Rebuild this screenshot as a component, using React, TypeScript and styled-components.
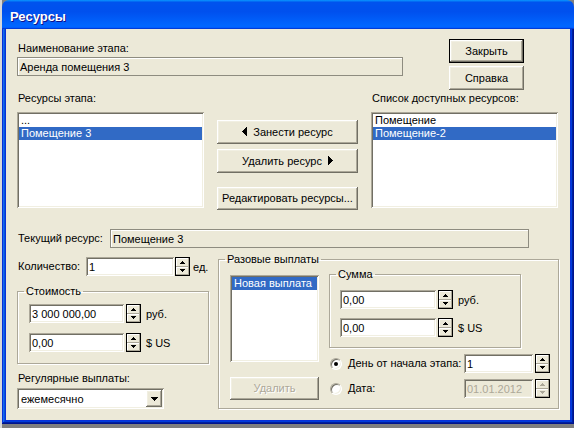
import React from 'react';
import styled, { createGlobalStyle, css } from 'styled-components';

const FACE = '#ece9d8';

const GlobalStyle = createGlobalStyle`
  html, body {
    margin: 0;
    padding: 0;
  }
  body {
    width: 574px;
    height: 428px;
    overflow: hidden;
    background: #7f7f7f;
    font-family: 'Liberation Sans', Arial, sans-serif;
    font-size: 11px;
    color: #000;
  }
`;

const raised = css`
  box-shadow: inset -1px -1px #716f64, inset 1px 1px #fff, inset -2px -2px #aca899, inset 2px 2px #f1efe2;
`;

const sunken = css`
  box-shadow: inset 1px 1px #aca899, inset -1px -1px #fff, inset 2px 2px #716f64, inset -2px -2px #f1efe2;
`;

const Desktop = styled.div`
  height: 428px;
  padding-left: 2px;
  box-sizing: border-box;
  background: linear-gradient(to right, #d8d8d8 0 2px, #7f7f7f 2px);
`;

const Window = styled.div`
  width: 572px;
  height: 424px;
  display: flex;
  flex-direction: column;
`;

const TitleBar = styled.div`
  flex: none;
  height: 29px;
  box-sizing: border-box;
  padding: 3px 0 0 8px;
  display: flex;
  align-items: center;
  border-radius: 7px 7px 0 0;
  background: linear-gradient(180deg, #0997ff, #0053ee 8%, #0050ee 40%, #06f 88%, #06f 93%, #005bff 95%, #003dd7 96%, #003dd7);
  color: #fff;
  font: bold 13px 'Liberation Sans', Arial, sans-serif;
  text-shadow: 1px 1px #0f1089;
`;

const Frame = styled.div`
  flex: 1;
  padding: 0 4px 4px;
  background: #0831d9;
  box-shadow: inset -1px -1px #00138c, inset 1px 0 #0831d9, inset -2px -2px #001ea0, inset 2px 0 #166aee,
    inset -3px -3px #003bda, inset 3px 0 #0855dd;
`;

const Client = styled.div`
  height: 100%;
  box-sizing: border-box;
  padding: 10px 0 0 11px;
  background: ${FACE};
`;

const Row = styled.div<{ $mt?: number; $ml?: number; $align?: string }>`
  display: flex;
  align-items: ${(p) => p.$align ?? 'flex-start'};
  margin-top: ${(p) => p.$mt ?? 0}px;
  margin-left: ${(p) => p.$ml ?? 0}px;
`;

const Stack = styled.div<{ $w?: number; $mt?: number; $ml?: number; $gap?: number }>`
  display: flex;
  flex-direction: column;
  flex: none;
  width: ${(p) => (p.$w ? `${p.$w}px` : 'auto')};
  margin-top: ${(p) => p.$mt ?? 0}px;
  margin-left: ${(p) => p.$ml ?? 0}px;
  gap: ${(p) => p.$gap ?? 0}px;
`;

const Label = styled.div<{ $mt?: number; $ml?: number; $w?: number; $disabled?: boolean }>`
  flex: none;
  height: 13px;
  line-height: 13px;
  white-space: nowrap;
  width: ${(p) => (p.$w ? `${p.$w}px` : 'auto')};
  margin-top: ${(p) => p.$mt ?? 0}px;
  margin-left: ${(p) => p.$ml ?? 0}px;
  color: ${(p) => (p.$disabled ? '#aca899' : '#000')};
`;

const ReadField = styled.div<{ $w: number }>`
  flex: none;
  width: ${(p) => p.$w}px;
  height: 19px;
  box-sizing: border-box;
  padding-left: 2px;
  display: flex;
  align-items: center;
  border: 1px solid #8e8c80;
  box-shadow: inset 1px 1px #fff;
  background: ${FACE};
  white-space: nowrap;
`;

const Input = styled.div<{ $w: number; $disabled?: boolean }>`
  flex: none;
  width: ${(p) => p.$w}px;
  height: 19px;
  box-sizing: border-box;
  padding: 1px 0 0 3px;
  display: flex;
  align-items: center;
  background: ${(p) => (p.$disabled ? FACE : '#fff')};
  color: ${(p) => (p.$disabled ? '#aca899' : '#000')};
  white-space: nowrap;
  ${sunken}
`;

const Button = styled.button<{ $w: number; $h: number; $mt?: number; $default?: boolean }>`
  flex: none;
  width: ${(p) => p.$w}px;
  height: ${(p) => p.$h}px;
  margin-top: ${(p) => p.$mt ?? 0}px;
  padding: 0 0 1px;
  border: none;
  box-sizing: border-box;
  display: flex;
  align-items: center;
  justify-content: center;
  gap: 6px;
  background: ${FACE};
  font: 11px 'Liberation Sans', Arial, sans-serif;
  color: #000;
  white-space: nowrap;
  ${raised}
  ${(p) =>
    p.$default &&
    css`
      box-shadow: inset 0 0 0 1px #000, inset -2px -2px #716f64, inset 2px 2px #fff, inset -3px -3px #aca899,
        inset 3px 3px #f1efe2;
    `}
  &:disabled {
    color: #aca899;
    text-shadow: 1px 1px #fff;
  }
`;

const SpinBox = styled.div<{ $ml?: number }>`
  flex: none;
  width: 15px;
  height: 19px;
  box-sizing: border-box;
  margin-left: ${(p) => p.$ml ?? 1}px;
  border: 1px solid #000;
  display: flex;
  flex-direction: column;
`;

const SpinHalf = styled.div<{ $disabled?: boolean }>`
  flex: 1;
  display: flex;
  align-items: center;
  justify-content: center;
  background: ${FACE};
  color: ${(p) => (p.$disabled ? '#aca899' : '#000')};
  box-shadow: inset -1px -1px #aca899, inset 1px 1px #fff;
`;

const Unit = styled.span<{ $ml: number }>`
  margin-left: ${(p) => p.$ml}px;
  white-space: nowrap;
`;

const ListBox = styled.div<{ $w: number; $h: number; $mt?: number }>`
  flex: none;
  width: ${(p) => p.$w}px;
  height: ${(p) => p.$h}px;
  margin-top: ${(p) => p.$mt ?? 0}px;
  box-sizing: border-box;
  padding: 2px;
  background: #fff;
  ${sunken}
`;

const ListItem = styled.div<{ $selected?: boolean }>`
  height: 13px;
  line-height: 13px;
  padding-left: 2px;
  white-space: nowrap;
  background: ${(p) => (p.$selected ? '#316ac5' : 'transparent')};
  color: ${(p) => (p.$selected ? '#fff' : '#000')};
`;

const Group = styled.fieldset<{ $w: number; $mt?: number; $ml?: number; $pb?: number }>`
  flex: none;
  width: ${(p) => p.$w}px;
  min-width: 0;
  box-sizing: border-box;
  margin: ${(p) => p.$mt ?? 0}px 0 0 ${(p) => p.$ml ?? 0}px;
  padding: 0 0 ${(p) => p.$pb ?? 0}px;
  border: 1px solid #aca899;
  box-shadow: inset 1px 1px #fff, 1px 1px #fff;
`;

const Legend = styled.legend`
  margin-left: 6px;
  padding: 0 2px;
  height: 12px;
  line-height: 12px;
  white-space: nowrap;
`;

const Combo = styled.div<{ $w: number; $mt?: number }>`
  flex: none;
  width: ${(p) => p.$w}px;
  height: 21px;
  margin-top: ${(p) => p.$mt ?? 0}px;
  box-sizing: border-box;
  padding: 2px 2px 2px 4px;
  display: flex;
  align-items: center;
  justify-content: space-between;
  background: #fff;
  ${sunken}
`;

const ComboButton = styled.div`
  width: 16px;
  height: 17px;
  display: flex;
  align-items: center;
  justify-content: center;
  background: ${FACE};
  ${raised}
`;

const Radio = styled.span<{ $checked?: boolean }>`
  flex: none;
  width: 12px;
  height: 12px;
  box-sizing: border-box;
  margin-left: 1px;
  border-radius: 50%;
  border: 1px solid;
  border-color: #aca899 #fff #fff #aca899;
  background: #fff;
  box-shadow: inset 1px 1px #716f64, inset -1px -1px #f1efe2;
  display: flex;
  align-items: center;
  justify-content: center;
  &::after {
    content: '';
    width: 4px;
    height: 4px;
    border-radius: 50%;
    background: ${(p) => (p.$checked ? '#000' : 'transparent')};
  }
`;

const Triangle = ({ dir }: { dir: 'up' | 'down' | 'left' | 'right' }) => {
  if (dir === 'left') {
    return (
      <svg width="5" height="9" viewBox="0 0 5 9" shapeRendering="crispEdges">
        <rect x="4" y="0" width="1" height="9" />
        <rect x="3" y="1" width="1" height="7" />
        <rect x="2" y="2" width="1" height="5" />
        <rect x="1" y="3" width="1" height="3" />
        <rect x="0" y="4" width="1" height="1" />
      </svg>
    );
  }
  if (dir === 'right') {
    return (
      <svg width="5" height="9" viewBox="0 0 5 9" shapeRendering="crispEdges">
        <rect x="0" y="0" width="1" height="9" />
        <rect x="1" y="1" width="1" height="7" />
        <rect x="2" y="2" width="1" height="5" />
        <rect x="3" y="3" width="1" height="3" />
        <rect x="4" y="4" width="1" height="1" />
      </svg>
    );
  }
  if (dir === 'up') {
    return (
      <svg width="5" height="3" viewBox="0 0 5 3" shapeRendering="crispEdges" fill="currentColor">
        <rect x="2" y="0" width="1" height="1" />
        <rect x="1" y="1" width="3" height="1" />
        <rect x="0" y="2" width="5" height="1" />
      </svg>
    );
  }
  return (
    <svg width="5" height="3" viewBox="0 0 5 3" shapeRendering="crispEdges" fill="currentColor">
      <rect x="0" y="0" width="5" height="1" />
      <rect x="1" y="1" width="3" height="1" />
      <rect x="2" y="2" width="1" height="1" />
    </svg>
  );
};

const Spin = ({ ml, disabled }: { ml?: number; disabled?: boolean }) => (
  <SpinBox $ml={ml}>
    <SpinHalf $disabled={disabled}>
      <Triangle dir="up" />
    </SpinHalf>
    <SpinHalf $disabled={disabled}>
      <Triangle dir="down" />
    </SpinHalf>
  </SpinBox>
);

const MoneyRow = ({ value, unit, mt, w }: { value: string; unit: string; mt?: number; w: number }) => (
  <Row $align="center" $mt={mt}>
    <Input $w={w}>{value}</Input>
    <Spin ml={2} />
    <Unit $ml={5}>{unit}</Unit>
  </Row>
);

export default function App() {
  return (
    <>
      <GlobalStyle />
      <Desktop>
        <Window>
          <TitleBar>Ресурсы</TitleBar>
          <Frame>
            <Client>
              <Row>
                <Stack $w={386}>
                  <Label $mt={3} $ml={1}>Наименование этапа:</Label>
                  <Stack $mt={2}>
                    <ReadField $w={386}>Аренда помещения 3</ReadField>
                  </Stack>
                </Stack>
                <Stack $ml={46} $gap={3}>
                  <Button $w={75} $h={24} $default>Закрыть</Button>
                  <Button $w={75} $h={24}>Справка</Button>
                </Stack>
              </Row>

              <Row>
                <Stack $w={187}>
                  <Label $mt={2} $ml={1}>Ресурсы этапа:</Label>
                  <ListBox $w={187} $h={96} $mt={7}>
                    <ListItem>...</ListItem>
                    <ListItem $selected>Помещение 3</ListItem>
                  </ListBox>
                </Stack>
                <Stack $w={141} $ml={13} $mt={30}>
                  <Button $w={141} $h={24}>
                    <Triangle dir="left" />
                    Занести ресурс
                  </Button>
                  <Button $w={141} $h={24} $mt={5}>
                    Удалить ресурс
                    <Triangle dir="right" />
                  </Button>
                  <Button $w={141} $h={23} $mt={14}>Редактировать ресурсы...</Button>
                </Stack>
                <Stack $w={187} $ml={13}>
                  <Label $mt={2} $ml={1}>Список доступных ресурсов:</Label>
                  <ListBox $w={187} $h={96} $mt={7}>
                    <ListItem>Помещение</ListItem>
                    <ListItem $selected>Помещение-2</ListItem>
                  </ListBox>
                </Stack>
              </Row>

              <Row $mt={19} $align="center">
                <Label $ml={1} $w={92}>Текущий ресурс:</Label>
                <ReadField $w={419}>Помещение 3</ReadField>
              </Row>

              <Row>
                <Stack $w={192}>
                  <Row $mt={9} $align="center">
                    <Label $ml={1} $w={68}>Количество:</Label>
                    <Input $w={88}>1</Input>
                    <Spin ml={1} />
                    <Unit $ml={3}>ед.</Unit>
                  </Row>
                  <Group $w={192} $mt={9} $pb={11}>
                    <Legend>Стоимость</Legend>
                    <Stack $ml={11} $mt={7}>
                      <MoneyRow w={95} value="3 000 000,00" unit="руб." />
                      <MoneyRow w={95} value="0,00" unit="$ US" mt={10} />
                    </Stack>
                  </Group>
                  <Label $mt={8} $ml={1}>Регулярные выплаты:</Label>
                  <Combo $w={147} $mt={3}>
                    ежемесячно
                    <ComboButton>
                      <svg width="7" height="4" viewBox="0 0 7 4" shapeRendering="crispEdges">
                        <rect x="0" y="0" width="7" height="1" />
                        <rect x="1" y="1" width="5" height="1" />
                        <rect x="2" y="2" width="3" height="1" />
                        <rect x="3" y="3" width="1" height="1" />
                      </svg>
                    </ComboButton>
                  </Combo>
                </Stack>

                <Group $w={341} $ml={9} $mt={5} $pb={8}>
                  <Legend>Разовые выплаты</Legend>
                  <Row $ml={11}>
                    <Stack $w={89} $mt={10}>
                      <ListBox $w={89} $h={87}>
                        <ListItem $selected>Новая выплата</ListItem>
                      </ListBox>
                      <Button $w={89} $h={23} $mt={15} disabled>Удалить</Button>
                    </Stack>
                    <Stack $ml={10} $mt={3}>
                      <Group $w={192} $pb={10}>
                        <Legend>Сумма</Legend>
                        <Stack $ml={10} $mt={10}>
                          <MoneyRow w={96} value="0,00" unit="руб." />
                          <MoneyRow w={96} value="0,00" unit="$ US" mt={9} />
                        </Stack>
                      </Group>
                      <Row $mt={6} $align="center">
                        <Radio $checked />
                        <Label $ml={6} $w={116}>День от начала этапа:</Label>
                        <Input $w={69}>1</Input>
                        <Spin ml={2} />
                      </Row>
                      <Row $mt={6} $align="center">
                        <Radio />
                        <Label $ml={6} $w={116}>Дата:</Label>
                        <Input $w={69} $disabled>01.01.2012</Input>
                        <Spin ml={2} disabled />
                      </Row>
                    </Stack>
                  </Row>
                </Group>
              </Row>
            </Client>
          </Frame>
        </Window>
      </Desktop>
    </>
  );
}
